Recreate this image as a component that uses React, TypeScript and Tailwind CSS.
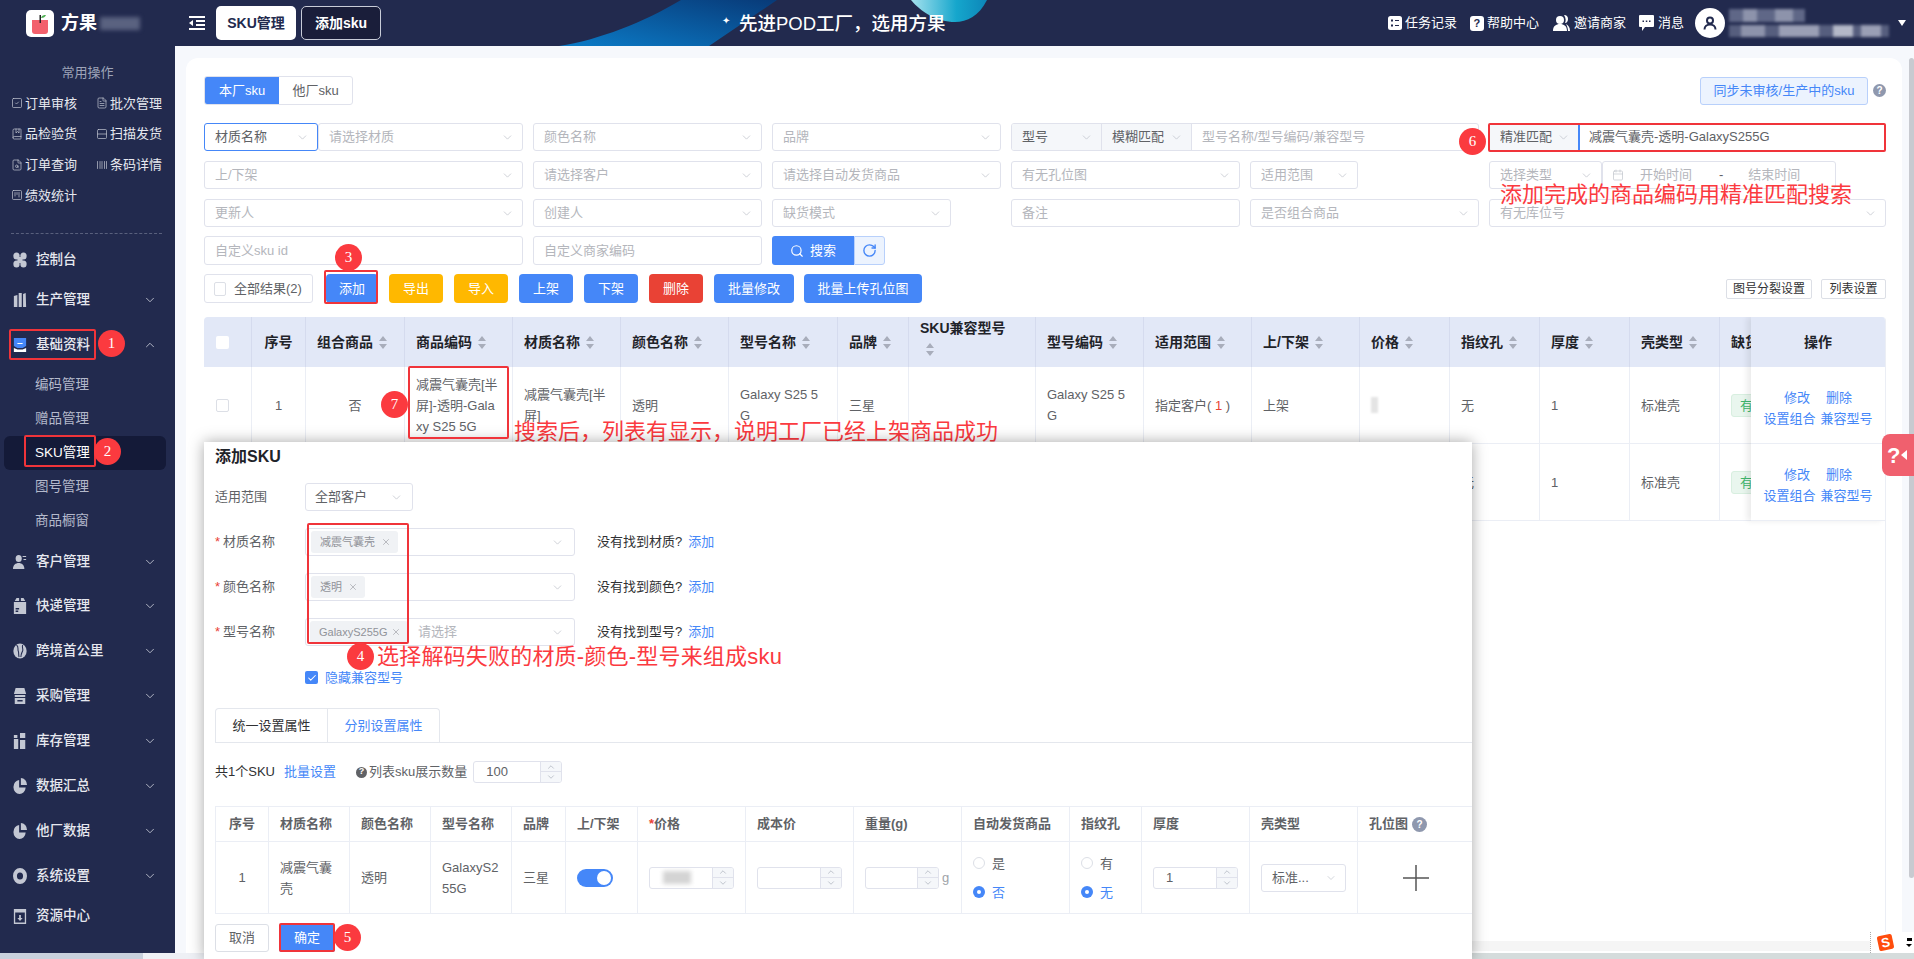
import type { ReactNode } from "react";
import {
  Barcode,
  BookMarked,
  Calendar,
  Check,
  ChevronDown,
  ChevronUp,
  FileSearch,
  FileText,
  RotateCw,
  Rows2,
  Search,
  SquareCheck,
  SquareKanban,
  X,
} from "lucide-react";

const MENU_ICONS: Record<string, ReactNode> = {
  dash: (
    <>
      <circle cx="4" cy="4" r="3.6" />
      <circle cx="12" cy="4" r="3.6" />
      <circle cx="4" cy="12" r="3.6" />
      <circle cx="12" cy="12" r="3.6" />
      <rect x="5" y="5" width="6" height="6" />
    </>
  ),
  prod: <path d="M1 4l4-1v12H1zM6.5 1h3.5v14H6.5zM11.5 2l3-1 .5 14h-3.5z" />,
  base: (
    <>
      <path d="M1 1h14v8l-4 2H5L1 9z" fill="#4587f8" />
      <path d="M1 11l4 1.5h6l4-1.5v4H1z" fill="#fff" />
      <path d="M5 6h6v1H5z" fill="#fff" />
    </>
  ),
  user: (
    <>
      <circle cx="6.5" cy="4.5" r="3.5" />
      <path d="M0 15c0-4 3-6 6.5-6s6.5 2 6.5 6zM11 2h4v1h-4zM12 5h3v1h-3z" />
    </>
  ),
  box: (
    <>
      <path d="M4 0h3v3H2zM9 0h3l2 3H9z" />
      <path d="M1 4h14v12H1zM3 10v1.5h4V10zM3 12.5V14h3v-1.5z" fillRule="evenodd" />
    </>
  ),
  globe: (
    <>
      <circle cx="8" cy="8" r="7.6" />
      <path d="M4 2c3 2 1 4 2 6s0 4 1 6M11 2c-1 3 1 4 0 6s-2 3-2 6" stroke="#222a4e" fill="none" strokeWidth="1.2" />
    </>
  ),
  shop: <path d="M3 0h10l2 6H1zM2 7h12v2H2zM2 10h12v6H2zM5 12v1.5h6V12z" fillRule="evenodd" />,
  stock: <path d="M1 6h5v10H1zM8 0h6v5H8zM8 7h6v9H8zM1 2h4v3H1z" />,
  pie: (
    <>
      <path d="M7 2a7 7 0 1 0 7.5 7.5H7z" />
      <path d="M9 0a7 7 0 0 1 7 7H9z" />
    </>
  ),
  gear: (
    <path
      d="M8 0a8 8 0 1 0 0 16A8 8 0 0 0 8 0zm0 4.500a3.500 3.500 0 1 1 0 7 3.500 3.500 0 0 1 0-7z"
      fillRule="evenodd"
    />
  ),
  res: <path d="M1 1h14v15H1zM2.500 4.500v10h11v-10zM7 7h2v3h2l-3 3-3-3h2z" fillRule="evenodd" />,
};

function MenuIcon({ name }: { name: string }) {
  return (
    <svg viewBox="0 0 16 16" className="h-[16px] w-[14px] shrink-0 fill-[#c3c7d3]" preserveAspectRatio="none">
      {MENU_ICONS[name]}
    </svg>
  );
}

const SHORTCUTS = [
  { label: "订单审核", Icon: SquareCheck },
  { label: "批次管理", Icon: FileText },
  { label: "品检验货", Icon: BookMarked },
  { label: "扫描发货", Icon: Rows2 },
  { label: "订单查询", Icon: FileSearch },
  { label: "条码详情", Icon: Barcode },
  { label: "绩效统计", Icon: SquareKanban },
];

const SUB_MENU = ["编码管理", "赠品管理", "SKU管理", "图号管理", "商品橱窗"];

const LOWER_MENU = [
  { label: "客户管理", icon: "user", cls: "mt-[4px]" },
  { label: "快递管理", icon: "box", cls: "mt-[4px]" },
  { label: "跨境首公里", icon: "globe", cls: "mt-[5px]" },
  { label: "采购管理", icon: "shop", cls: "mt-[5px]" },
  { label: "库存管理", icon: "stock", cls: "mt-[5px]" },
  { label: "数据汇总", icon: "pie", cls: "mt-[5px]" },
  { label: "他厂数据", icon: "pie", cls: "mt-[5px]" },
  { label: "系统设置", icon: "gear", cls: "mt-[5px]" },
];

function MenuRow({ label, icon, open, arrow = true, cls = "" }: { label: string; icon: string; open?: boolean; arrow?: boolean; cls?: string }) {
  return (
    <div className={`flex h-[40px] items-center pl-[13px] pr-[18px] text-[13.5px] font-medium text-[#e6e8ef] ${cls}`}>
      <MenuIcon name={icon} />
      <span className="ml-[9px]">{label}</span>
      {arrow &&
        (open ? (
          <ChevronUp className="ml-auto h-[14px] w-[14px] text-[#c3c7d3]" strokeWidth={1.5} />
        ) : (
          <ChevronDown className="ml-auto h-[14px] w-[14px] text-[#c3c7d3]" strokeWidth={1.5} />
        ))}
    </div>
  );
}

function Sidebar() {
  return (
    <aside className="h-[953px] w-[175px] shrink-0 bg-[#222a4e]">
      <div className="flex h-[46px] items-center pl-[26px]">
        <svg viewBox="0 0 28 27" className="h-[27px] w-[28px] shrink-0">
          <rect width="28" height="27" rx="5" fill="#fff" />
          <path d="M6 10h16v11a3 3 0 0 1-3 3H9a3 3 0 0 1-3-3z" fill="#f2606c" />
          <path d="M13.500 5h1.500v8h-1.500z" fill="#222" />
          <path d="M15 8c1-3 3-3 5-3-1 2-2 3-5 3z" fill="#4caf50" />
        </svg>
        <span className="ml-[7px] text-[18px] font-bold text-white">方果</span>
        <div className="ml-[3px] h-[13px] w-[40px] bg-[#5a6280] blur-[2px]" />
      </div>
      <div className="mt-[17px] text-center text-[13px] leading-[20px] text-[#9ea4b8]">常用操作</div>
      <div className="mt-[5px] grid auto-rows-[30.67px] grid-cols-[85px_80px] pl-[11px]">
        {SHORTCUTS.map(({ label, Icon }) => (
          <div key={label} className="flex items-center text-[13px] text-[#e6e8ef]">
            <Icon className="h-[12px] w-[12px] shrink-0 text-[#c3c7d3]" strokeWidth={1.4} />
            <span className="ml-[2px] whitespace-nowrap">{label}</span>
          </div>
        ))}
      </div>
      <div className="ml-[11px] mt-[22px] w-[151px] border-t border-dashed border-[#59607d]" />
      <div className="mt-[6px]">
        <MenuRow label="控制台" icon="dash" arrow={false} />
        <MenuRow label="生产管理" icon="prod" />
        <MenuRow label="基础资料" icon="base" open cls="mt-[5px]" />
        <div className="mt-[3px]">
          {SUB_MENU.map((label) =>
            label === "SKU管理" ? (
              <div key={label} className="ml-[4px] flex h-[34px] w-[162px] items-center rounded-md bg-[#141a38] pl-[31px] text-[13.5px] text-white">
                {label}
              </div>
            ) : (
              <div key={label} className="flex h-[34px] items-center pl-[35px] text-[13.5px] text-[#b4b9cb]">
                {label}
              </div>
            ),
          )}
        </div>
        {LOWER_MENU.map((m) => (
          <MenuRow key={m.label} label={m.label} icon={m.icon} cls={m.cls} />
        ))}
        <MenuRow label="资源中心" icon="res" arrow={false} />
      </div>
    </aside>
  );
}

function Topbar() {
  return (
    <header className="relative flex h-[46px] items-center overflow-hidden bg-[#222a4e] pl-[14px] pr-[8px] text-white">
      <svg viewBox="0 0 430 46" className="absolute left-[384px] top-0 h-[46px] w-[430px]">
        <defs>
          <linearGradient id="swoosh" x1="0" y1="1" x2="1" y2="0">
            <stop offset="0" stopColor="#0b7cc8" />
            <stop offset="1" stopColor="#083a78" />
          </linearGradient>
          <linearGradient id="blob" x1="0" y1="0" x2="1" y2="0">
            <stop offset="0" stopColor="#a6e2ee" />
            <stop offset="0.6" stopColor="#15a6cc" />
            <stop offset="1" stopColor="#0d86b8" />
          </linearGradient>
        </defs>
        <path d="M0 46C40 40 85 22 122 0H218L150 46z" fill="url(#swoosh)" />
        <path d="M352 0H428C420 16 408 22 396 22C378 22 362 12 352 0z" fill="url(#blob)" />
      </svg>
      <svg viewBox="0 0 16 14" className="relative h-[14px] w-[16px]">
        <path d="M0 0h16v2H0zM7 4h9v2H7zM7 8h9v2H7zM0 12h16v2H0zM0 7l4-3v6z" fill="#fff" />
      </svg>
      <div className="relative ml-[11px] flex h-[34px] w-[80px] items-center justify-center rounded-[5px] bg-white text-[14px] font-bold text-[#222a4e]">
        SKU管理
      </div>
      <div className="relative ml-[5px] flex h-[34px] w-[80px] items-center justify-center rounded-[5px] border border-[#c8ccd8] bg-[#1a1e3a] text-[14px] font-bold">
        添加sku
      </div>
      <span className="absolute left-[547px] top-[13px] text-[10px]">✦</span>
      <span className="absolute left-[564px] top-[11px] whitespace-nowrap text-[18.500px] font-medium leading-[26px]">
        先进POD工厂，选用方果
      </span>
      <div className="relative ml-auto flex items-center text-[13px]">
        <svg viewBox="0 0 14 14" className="h-[14px] w-[14px]">
          <rect width="14" height="14" rx="2.500" fill="#fff" />
          <path d="M3 3.500h2v2H3zM7 4h4v1H7zM3 8.500h2v2H3zM7 9h4v1H7z" fill="#222a4e" />
        </svg>
        <span className="ml-[3px]">任务记录</span>
        <div className="ml-[13px] flex h-[15px] w-[14px] items-center justify-center rounded-[3px] bg-white text-[11px] font-bold text-[#222a4e]">?</div>
        <span className="ml-[3px]">帮助中心</span>
        <svg viewBox="0 0 17 16" className="ml-[14px] h-[16px] w-[17px] fill-white">
          <circle cx="7" cy="5" r="4" />
          <path d="M0 16c0-5 3-7 7-7s7 2 7 7zM11 0c3 0 4 2 4 4s-1 4-3 4c1-2 1-5-1-8zM13 9c2 1 4 3 4 7h-2c0-3-1-5-2-7z" />
        </svg>
        <span className="ml-[4px]">邀请商家</span>
        <svg viewBox="0 0 15 16" className="ml-[13px] h-[16px] w-[15px]">
          <path d="M1 0h13a1 1 0 0 1 1 1v10a1 1 0 0 1-1 1H6l-3 4v-4H1a1 1 0 0 1-1-1V1a1 1 0 0 1 1-1z" fill="#fff" />
          <path d="M3.500 5.500h1.500V7H3.500zM6.800 5.500h1.500V7H6.800zM10 5.500h1.500V7H10z" fill="#222a4e" />
        </svg>
        <span className="ml-[4px]">消息</span>
        <div className="ml-[11px] flex h-[30px] w-[30px] items-center justify-center rounded-full bg-white">
          <svg viewBox="0 0 14 14" className="h-[14px] w-[14px]">
            <circle cx="7" cy="4.500" r="3" fill="none" stroke="#222a4e" strokeWidth="2" />
            <path d="M1.500 13.500c0-3 2.500-5 5.500-5s5.500 2 5.500 5" fill="none" stroke="#222a4e" strokeWidth="2" />
          </svg>
        </div>
        <div className="ml-[4px] w-[169px]">
          <div className="flex h-[13px] w-[76px] bg-[#5f6787] blur-[1.5px]">
            <div className="ml-[14px] h-full w-[14px] bg-[#8d93ab]" />
            <div className="ml-[18px] h-full w-[18px] bg-[#8d93ab]" />
          </div>
          <div className="mt-[3px] flex h-[12px] w-[160px] bg-[#565e7e] blur-[1.5px]">
            <div className="ml-[12px] h-full w-[24px] bg-[#8d93ab]" />
            <div className="ml-[14px] h-full w-[40px] bg-[#9a9fb5]" />
            <div className="ml-[14px] h-full w-[20px] bg-[#b4b8c8]" />
            <div className="ml-[8px] h-full w-[20px] bg-[#9a9fb5]" />
          </div>
        </div>
        <div className="h-0 w-0 border-x-[4px] border-t-[6px] border-x-transparent border-t-white" />
      </div>
    </header>
  );
}

function Select({ text, w, dark, focus }: { text: string; w: string; dark?: boolean; focus?: boolean }) {
  return (
    <div className={`flex h-full items-center justify-between rounded-[3px] bg-white pl-[10px] pr-[8px] text-[13px] ${focus ? "border-[1.5px] border-[#4587f8]" : "border border-[#e0e2ec]"} ${dark ? "text-[#606266]" : "text-[#b4b6bc]"} ${w}`}>
      <span className="whitespace-nowrap">{text}</span>
      <ChevronDown className="h-[13px] w-[13px] shrink-0 text-[#c0c4cc]" strokeWidth={1.4} />
    </div>
  );
}

function Input({ text, w }: { text: string; w: string }) {
  return (
    <div className={`flex h-full items-center rounded-[3px] border border-[#e0e2ec] bg-white pl-[10px] text-[13px] text-[#b4b6bc] ${w}`}>
      <span className="whitespace-nowrap">{text}</span>
    </div>
  );
}

function Btn({ label, w, bg }: { label: string; w: string; bg: string }) {
  return (
    <div className={`flex h-full items-center justify-center rounded-[4px] text-[13px] text-white ${w} ${bg}`}>{label}</div>
  );
}

function Filters() {
  return (
    <div className="mt-[18px] flex flex-col">
      <div className="flex h-[28px] gap-[10px]">
        <div className="flex w-[319px]">
          <Select text="材质名称" w="w-[114px]" dark focus />
          <Select text="请选择材质" w="w-[205px]" />
        </div>
        <Select text="颜色名称" w="w-[229px]" />
        <Select text="品牌" w="w-[229px]" />
        <div className="flex w-[468px] overflow-hidden rounded-[3px] border border-[#e0e2ec]">
          <div className="flex w-[90px] items-center justify-between border-r border-[#e0e2ec] bg-[#f5f7fa] pl-[10px] pr-[8px] text-[13px] text-[#606266]">
            型号
            <ChevronDown className="h-[13px] w-[13px] text-[#c0c4cc]" strokeWidth={1.4} />
          </div>
          <div className="flex w-[90px] items-center justify-between border-r border-[#e0e2ec] bg-[#f5f7fa] pl-[10px] pr-[8px] text-[13px] text-[#606266]">
            模糊匹配
            <ChevronDown className="h-[13px] w-[13px] text-[#c0c4cc]" strokeWidth={1.4} />
          </div>
          <div className="flex flex-1 items-center pl-[10px] text-[13px] text-[#b4b6bc]">型号名称/型号编码/兼容型号</div>
        </div>
        <div className="flex w-[397px] overflow-hidden rounded-[3px] border border-[#e0e2ec]">
          <div className="flex w-[90px] items-center justify-between border-r-2 border-[#4587f8] bg-[#f5f7fa] pl-[10px] pr-[8px] text-[13px] text-[#606266]">
            精准匹配
            <ChevronDown className="h-[13px] w-[13px] text-[#c0c4cc]" strokeWidth={1.4} />
          </div>
          <div className="flex flex-1 items-center pl-[9px] text-[13px] text-[#606266]">减震气囊壳-透明-GalaxyS255G</div>
        </div>
      </div>
      <div className="mt-[10px] flex h-[28px] gap-[10px]">
        <Select text="上/下架" w="w-[319px]" />
        <Select text="请选择客户" w="w-[229px]" />
        <Select text="请选择自动发货商品" w="w-[229px]" />
        <Select text="有无孔位图" w="w-[229px]" />
        <Select text="适用范围" w="w-[108px]" />
        <div className="ml-[121px] flex h-full">
          <Select text="选择类型" w="w-[113px]" />
          <div className="flex w-[234px] items-center rounded-[3px] border border-[#e0e2ec] pl-[9px] text-[13px] text-[#b4b6bc]">
            <Calendar className="h-[12px] w-[12px] text-[#c0c4cc]" strokeWidth={1.4} />
            <span className="ml-[16px]">开始时间</span>
            <span className="ml-[27px] text-[#606266]">-</span>
            <span className="ml-[25px]">结束时间</span>
          </div>
        </div>
      </div>
      <div className="mt-[10px] flex h-[28px] gap-[10px]">
        <Select text="更新人" w="w-[319px]" />
        <Select text="创建人" w="w-[229px]" />
        <Select text="缺货模式" w="w-[179px]" />
        <Input text="备注" w="ml-[50px] w-[229px]" />
        <Select text="是否组合商品" w="w-[229px]" />
        <Select text="有无库位号" w="w-[397px]" />
      </div>
      <div className="mt-[9px] flex h-[29px] gap-[10px]">
        <Input text="自定义sku id" w="w-[319px]" />
        <Input text="自定义商家编码" w="w-[229px]" />
        <div className="flex">
          <div className="flex w-[82px] items-center justify-center gap-[6px] rounded-l-[3px] bg-[#4587f8] text-[13px] text-white">
            <Search className="h-[14px] w-[14px]" strokeWidth={2} />
            搜索
          </div>
          <div className="flex w-[31px] items-center justify-center rounded-r-[3px] border border-[#b8d0fb] bg-[#ecf3fe]">
            <RotateCw className="h-[15px] w-[15px] text-[#4587f8]" strokeWidth={2.2} />
          </div>
        </div>
      </div>
    </div>
  );
}

function Sort() {
  return (
    <svg viewBox="0 0 8 13" className="ml-[6px] inline-block h-[13px] w-[8px] align-[-2px] fill-[#a8adbb]">
      <path d="M4 0l4 5H0zM4 13L0 8h8z" />
    </svg>
  );
}

const HEAD = [
  { label: "组合商品", w: "w-[99px]" },
  { label: "商品编码", w: "w-[108px]" },
  { label: "材质名称", w: "w-[108px]" },
  { label: "颜色名称", w: "w-[108px]" },
  { label: "型号名称", w: "w-[109px]" },
  { label: "品牌", w: "w-[71px]" },
  { label: "SKU兼容型号", w: "w-[127px]" },
  { label: "型号编码", w: "w-[108px]" },
  { label: "适用范围", w: "w-[108px]" },
  { label: "上/下架", w: "w-[108px]" },
  { label: "价格", w: "w-[90px]" },
  { label: "指纹孔", w: "w-[90px]" },
  { label: "厚度", w: "w-[90px]" },
  { label: "壳类型", w: "w-[90px]" },
  { label: "缺货模式", w: "w-[167px]" },
];

function Row() {
  const td = "border-r border-b border-[#ebeef5] pl-[11px] pr-[13px] break-all";
  return (
    <tr className="h-[77px] text-[13px] leading-[21px] text-[#606266]">
      <td className="border-r border-b border-[#ebeef5] pl-[12px]">
        <div className="h-[13px] w-[13px] rounded-[2px] border border-[#dcdfe6]" />
      </td>
      <td className="border-r border-b border-[#ebeef5] text-center">1</td>
      <td className="border-r border-b border-[#ebeef5] text-center">否</td>
      <td className={td}>减震气囊壳[半屏]-透明-Galaxy S25 5G</td>
      <td className={td}>减震气囊壳[半屏]</td>
      <td className={td}>透明</td>
      <td className={td}>Galaxy S25 5G</td>
      <td className={td}>三星</td>
      <td className={td} />
      <td className={td}>Galaxy S25 5G</td>
      <td className={td}>
        指定客户( <span className="text-[#e94235]">1</span> )
      </td>
      <td className={td}>上架</td>
      <td className={td}>
        <div className="h-[16px] w-[7px] bg-[#e4e4e4] blur-[1px]" />
      </td>
      <td className={td}>无</td>
      <td className={td}>1</td>
      <td className={td}>标准壳</td>
      <td className={td}>
        <span className="inline-block whitespace-nowrap rounded-[3px] border border-[#d8efe0] bg-[#e9f6ee] px-[8px] text-[#3fb56c]">有货</span>
      </td>
    </tr>
  );
}

function OpCell() {
  return (
    <div className="flex h-[77px] flex-col items-center justify-center border-b border-[#ebeef5] pt-[5px] text-[13px] leading-[21px] text-[#4587f8]">
      <div className="flex gap-[16px]">
        <span>修改</span>
        <span>删除</span>
      </div>
      <div className="flex gap-[5px]">
        <span>设置组合</span>
        <span>兼容型号</span>
      </div>
    </div>
  );
}

function MainTable() {
  return (
    <div className="relative mt-[14px] h-[623px] w-[1682px] overflow-hidden rounded-t-[4px] border-r border-[#ebeef5]">
      <table className="w-[1682px] table-fixed border-separate border-spacing-0">
        <thead>
          <tr className="h-[50px] bg-[#e2e8f7] text-left text-[14px] font-bold leading-[21px] text-[#1f2329]">
            <th className="w-[48px] border-r border-[#d5dbee] pl-[12px]">
              <div className="h-[13px] w-[13px] rounded-[2px] bg-white" />
            </th>
            <th className="w-[54px] border-r border-[#d5dbee] text-center">序号</th>
            {HEAD.map((h) => (
              <th key={h.label} className={`${h.w} overflow-hidden border-r border-[#d5dbee] pl-[11px] pr-[6px] font-bold`}>
                {h.label === "SKU兼容型号" ? (
                  <>
                    <div className="-mt-[6px]">{h.label}</div>
                    <Sort />
                  </>
                ) : (
                  <span className="whitespace-nowrap">
                    {h.label}
                    <Sort />
                  </span>
                )}
              </th>
            ))}
          </tr>
        </thead>
        <tbody>
          <Row />
          <Row />
        </tbody>
      </table>
      <div className="absolute right-0 top-0 w-[134px] bg-white shadow-[-4px_0_6px_rgba(0,0,0,0.08)]">
        <div className="flex h-[50px] items-center justify-center bg-[#e2e8f7] text-[14px] font-bold text-[#1f2329]">操作</div>
        <OpCell />
        <OpCell />
      </div>
    </div>
  );
}

function Spin({ w, value, blur }: { w: string; value?: string; blur?: boolean }) {
  return (
    <div className={`flex h-[22px] overflow-hidden rounded-[3px] border border-[#e0e2ec] bg-white ${w}`}>
      <div className="flex flex-1 items-center pl-[12px] text-[13px] text-[#606266]">
        {blur ? <div className="ml-[1px] h-[13px] w-[28px] bg-[#d4d4d4] blur-[2px]" /> : value}
      </div>
      <div className="flex w-[21px] flex-col border-l border-[#e0e2ec] bg-[#f5f7fa] text-[#9aa0ac]">
        <div className="flex h-1/2 items-center justify-center border-b border-[#e0e2ec]">
          <ChevronUp className="h-[10px] w-[10px]" strokeWidth={1.4} />
        </div>
        <div className="flex h-1/2 items-center justify-center">
          <ChevronDown className="h-[10px] w-[10px]" strokeWidth={1.4} />
        </div>
      </div>
    </div>
  );
}

function Radio({ on, label }: { on?: boolean; label: string }) {
  return (
    <div className={`flex h-[29px] items-center text-[13px] ${on ? "text-[#4587f8]" : "text-[#606266]"}`}>
      {on ? (
        <div className="flex h-[12px] w-[12px] items-center justify-center rounded-full bg-[#4587f8]">
          <div className="h-[4px] w-[4px] rounded-full bg-white" />
        </div>
      ) : (
        <div className="h-[12px] w-[12px] rounded-full border border-[#dcdfe6]" />
      )}
      <span className="ml-[7px]">{label}</span>
    </div>
  );
}

function Tag({ text, w, cls = "" }: { text: string; w: string; cls?: string }) {
  return (
    <div className={`flex h-[22px] shrink-0 items-center justify-between rounded-[3px] bg-[#f0f2f5] pl-[9px] pr-[7px] text-[11px] text-[#909399] ${w} ${cls}`}>
      <span className="whitespace-nowrap">{text}</span>
      <X className="h-[10px] w-[10px]" strokeWidth={1.4} />
    </div>
  );
}

function FormRow({ label, cls, children, missing }: { label: string; cls: string; children: ReactNode; missing: string }) {
  return (
    <div className={`flex h-[28px] items-center text-[13px] ${cls}`}>
      <div className="w-[90px] text-[#606266]">
        <span className="mr-[3px] text-[#e94235]">*</span>
        {label}
      </div>
      <div className="flex h-full w-[270px] items-center rounded-[3px] border border-[#e0e2ec] pl-[5px] pr-[10px]">
        {children}
        <ChevronDown className="ml-auto h-[13px] w-[13px] text-[#c0c4cc]" strokeWidth={1.4} />
      </div>
      <span className="ml-[22px] text-[#303133]">没有找到{missing}?</span>
      <span className="ml-[6px] text-[#4587f8]">添加</span>
    </div>
  );
}

function SubTable() {
  const th = "border-r border-[#ebeef5] pl-[11px] font-bold";
  const td = "border-r border-t border-[#ebeef5] pl-[11px]";
  return (
    <table className="mt-[23px] w-[1257px] table-fixed border-separate border-spacing-0 border-y border-l border-[#ebeef5]">
      <thead>
        <tr className="h-[34px] text-left text-[13px] text-[#606266]">
          <th className="w-[53px] border-r border-[#ebeef5] text-center font-bold">序号</th>
          <th className={`${th} w-[81px]`}>材质名称</th>
          <th className={`${th} w-[81px]`}>颜色名称</th>
          <th className={`${th} w-[81px]`}>型号名称</th>
          <th className={`${th} w-[54px]`}>品牌</th>
          <th className={`${th} w-[72px]`}>上/下架</th>
          <th className={`${th} w-[108px]`}>
            <span className="text-[#e94235]">*</span>价格
          </th>
          <th className={`${th} w-[108px]`}>成本价</th>
          <th className={`${th} w-[108px]`}>重量(g)</th>
          <th className={`${th} w-[108px]`}>自动发货商品</th>
          <th className={`${th} w-[72px]`}>指纹孔</th>
          <th className={`${th} w-[108px]`}>厚度</th>
          <th className={`${th} w-[108px]`}>壳类型</th>
          <th className="pl-[11px] font-bold">
            <span className="flex items-center">
              孔位图
              <span className="ml-[4px] flex h-[15px] w-[15px] items-center justify-center rounded-full bg-[#8f98ae] text-[10px] text-white">?</span>
            </span>
          </th>
        </tr>
      </thead>
      <tbody>
        <tr className="h-[72px] text-[13px] leading-[21px] text-[#606266]">
          <td className="border-r border-t border-[#ebeef5] text-center">1</td>
          <td className={`${td} pr-[12px] break-all`}>减震气囊壳</td>
          <td className={td}>透明</td>
          <td className={`${td} pr-[12px] break-all`}>GalaxyS255G</td>
          <td className={td}>三星</td>
          <td className={td}>
            <div className="flex h-[18px] w-[36px] items-center justify-end rounded-full bg-[#4587f8] pr-[2px]">
              <div className="h-[14px] w-[14px] rounded-full bg-white" />
            </div>
          </td>
          <td className={td}>
            <Spin w="w-[85px]" blur />
          </td>
          <td className={td}>
            <Spin w="w-[85px]" />
          </td>
          <td className={td}>
            <div className="flex items-center">
              <Spin w="w-[74px]" />
              <span className="ml-[3px] text-[#a0a3a9]">g</span>
            </div>
          </td>
          <td className={td}>
            <Radio label="是" />
            <Radio on label="否" />
          </td>
          <td className={td}>
            <Radio label="有" />
            <Radio on label="无" />
          </td>
          <td className={td}>
            <Spin w="w-[85px]" value="1" />
          </td>
          <td className={td}>
            <div className="flex h-[28px] w-[85px] items-center justify-between rounded-[3px] border border-[#e0e2ec] pl-[10px] pr-[8px]">
              标准...
              <ChevronDown className="h-[12px] w-[12px] text-[#c0c4cc]" strokeWidth={1.4} />
            </div>
          </td>
          <td className="border-t border-[#ebeef5]">
            <svg viewBox="0 0 26 26" className="ml-[45px] h-[26px] w-[26px]">
              <path d="M13 0v26M0 13h26" stroke="#555" strokeWidth="1.500" />
            </svg>
          </td>
        </tr>
      </tbody>
    </table>
  );
}

function Modal() {
  return (
    <div className="absolute left-[204px] top-[442px] z-30 h-[517px] w-[1268px] overflow-hidden bg-white pl-[11px] shadow-[0_0_14px_rgba(0,0,0,0.35)]">
      <div className="h-[41px] pt-[4px] text-[16px] font-bold leading-[22px] text-[#1f2329]">添加SKU</div>
      <div className="flex h-[28px] items-center text-[13px] text-[#606266]">
        <div className="w-[90px]">适用范围</div>
        <div className="flex h-full w-[108px] items-center justify-between rounded-[3px] border border-[#e0e2ec] pl-[9px] pr-[9px]">
          全部客户
          <ChevronDown className="h-[13px] w-[13px] text-[#c0c4cc]" strokeWidth={1.4} />
        </div>
      </div>
      <FormRow label="材质名称" missing="材质" cls="mt-[17px]">
        <Tag text="减震气囊壳" w="w-[87px]" />
      </FormRow>
      <FormRow label="颜色名称" missing="颜色" cls="mt-[17px]">
        <Tag text="透明" w="w-[54px]" />
      </FormRow>
      <FormRow label="型号名称" missing="型号" cls="mt-[17px]">
        <Tag text="GalaxyS255G" w="w-[98px]" cls="-ml-[1px]" />
        <span className="ml-[10px] text-[#b4b6bc]">请选择</span>
      </FormRow>
      <div className="ml-[90px] mt-[25px] flex h-[13px] items-center text-[13px] text-[#4587f8]">
        <div className="flex h-[13px] w-[13px] items-center justify-center rounded-[2px] bg-[#4587f8]">
          <Check className="h-[10px] w-[10px] text-white" strokeWidth={2.5} />
        </div>
        <span className="ml-[7px]">隐藏兼容型号</span>
      </div>
      <div className="mt-[24px] flex h-[35px] border-b border-[#e4e7ed] text-[13px]">
        <div className="flex w-[113px] items-center justify-center rounded-tl-[4px] border-x border-t border-[#e4e7ed] bg-white text-[#303133]">统一设置属性</div>
        <div className="flex w-[112px] items-center justify-center rounded-tr-[4px] border-r border-t border-[#e4e7ed] text-[#4587f8]">分别设置属性</div>
      </div>
      <div className="mt-[18px] flex h-[22px] items-center text-[13px] text-[#303133]">
        <span>共1个SKU</span>
        <span className="ml-[9px] text-[#4587f8]">批量设置</span>
        <span className="ml-[20px] flex h-[11px] w-[11px] items-center justify-center rounded-full bg-[#606266] text-[9px] font-bold text-white">?</span>
        <span className="ml-[2px] text-[#606266]">列表sku展示数量</span>
        <Spin w="ml-[6px] w-[89px]" value="100" />
      </div>
      <SubTable />
      <div className="mt-[10px] flex h-[28px] gap-[10px] text-[13px]">
        <div className="flex w-[54px] items-center justify-center rounded-[3px] border border-[#dcdfe6] text-[#606266]">取消</div>
        <div className="flex w-[56px] items-center justify-center rounded-[3px] bg-[#4587f8] text-white">确定</div>
      </div>
    </div>
  );
}

function Num({ n, cls }: { n: number; cls: string }) {
  return (
    <div className={`absolute z-40 flex h-[27px] w-[27px] items-center justify-center rounded-full bg-[#fb3a3f] text-[15px] text-white [font-family:'Liberation_Serif',serif] ${cls}`}>
      {n}
    </div>
  );
}

function Annotations() {
  const box = "absolute z-40 rounded-[2px] border-[2px] border-[#f0343a]";
  const note = "absolute whitespace-nowrap text-[22px] leading-[28px] text-[#fb3a3f]";
  return (
    <>
      <div className={`${box} left-[9px] top-[329px] h-[31px] w-[87px]`} />
      <div className={`${box} left-[24px] top-[435px] h-[32px] w-[72px]`} />
      <div className={`${box} left-[324px] top-[270px] h-[34px] w-[54px]`} />
      <div className={`${box} left-[1488px] top-[123px] h-[29px] w-[398px]`} />
      <div className={`${box} left-[408px] top-[366px] h-[73px] w-[101px]`} />
      <div className={`${box} left-[307px] top-[523px] h-[121px] w-[102px]`} />
      <div className={`${box} left-[279px] top-[923px] h-[29px] w-[56px]`} />
      <Num n={1} cls="left-[98px] top-[330px]" />
      <Num n={2} cls="left-[94px] top-[438px]" />
      <Num n={3} cls="left-[335px] top-[244px]" />
      <Num n={4} cls="left-[347px] top-[643px]" />
      <Num n={5} cls="left-[334px] top-[924px]" />
      <Num n={6} cls="left-[1459px] top-[128px]" />
      <Num n={7} cls="left-[381px] top-[391px]" />
      <div className={`${note} left-[1500px] top-[181px] z-20`}>添加完成的商品编码用精准匹配搜索</div>
      <div className={`${note} left-[514px] top-[418px] z-20`}>搜索后，列表有显示，说明工厂已经上架商品成功</div>
      <div className={`${note} left-[377px] top-[643px] z-40 tracking-[0.2px]`}>选择解码失败的材质-颜色-型号来组成sku</div>
    </>
  );
}

export default function App() {
  return (
    <div className="relative h-[959px] w-[1914px] overflow-hidden bg-[#eef0f5] [font-family:'Liberation_Sans','Noto_Sans_CJK_SC',sans-serif]">
      <div className="flex h-[953px]">
        <Sidebar />
        <main className="flex min-w-0 flex-1 flex-col">
          <Topbar />
          <div className="flex flex-1 bg-[#f6f8fc] pl-[11px] pt-[12px]">
            <section className="h-[895px] w-[1716px] rounded-t-xl bg-white pl-[18px] pt-[18px]">
              <div className="flex h-[29px] w-[1682px] items-center">
                <div className="flex h-full overflow-hidden rounded-[3px] border border-[#e0e2ec] text-[13px]">
                  <div className="flex w-[74px] items-center justify-center bg-[#4587f8] text-white">本厂sku</div>
                  <div className="flex w-[73px] items-center justify-center text-[#606266]">他厂sku</div>
                </div>
                <div className="ml-auto flex h-[28px] w-[168px] items-center justify-center rounded-[3px] border border-[#b8d0fb] bg-[#ecf3fe] text-[13px] text-[#4587f8]">
                  同步未审核/生产中的sku
                </div>
                <div className="ml-[5px] flex h-[13px] w-[13px] items-center justify-center rounded-full bg-[#8f98ae] text-[10px] font-bold text-white">?</div>
              </div>
              <Filters />
              <div className="mt-[9px] flex h-[29px] w-[1682px] items-center gap-[11px]">
                <div className="flex h-full w-[109px] items-center rounded-[3px] border border-[#e0e2ec] pl-[9px] text-[13px] text-[#606266]">
                  <div className="h-[14px] w-[12px] rounded-[2px] border border-[#dcdfe6]" />
                  <span className="ml-[8px]">全部结果(2)</span>
                </div>
                <Btn label="添加" w="ml-[2px] w-[52px]" bg="bg-[#4587f8]" />
                <Btn label="导出" w="w-[54px]" bg="bg-[#ffb800]" />
                <Btn label="导入" w="w-[54px]" bg="bg-[#ffb800]" />
                <Btn label="上架" w="w-[54px]" bg="bg-[#4587f8]" />
                <Btn label="下架" w="w-[54px]" bg="bg-[#4587f8]" />
                <Btn label="删除" w="w-[54px]" bg="bg-[#e94235]" />
                <Btn label="批量修改" w="w-[80px]" bg="bg-[#4587f8]" />
                <Btn label="批量上传孔位图" w="-ml-[1px] w-[118px]" bg="bg-[#4587f8]" />
                <div className="ml-auto flex h-[20px] w-[86px] items-center justify-center rounded-[2px] border border-[#dcdfe6] text-[12px] text-[#303133]">图号分裂设置</div>
                <div className="-ml-[2px] flex h-[20px] w-[65px] items-center justify-center rounded-[2px] border border-[#dcdfe6] text-[12px] text-[#303133]">列表设置</div>
              </div>
              <MainTable />
            </section>
            <div className="ml-[7px] h-[820px] w-[5px] rounded-full bg-[#c8cad0]" />
          </div>
        </main>
      </div>
      <div className="absolute bottom-0 left-0 h-[6px] w-[143px] bg-[#c8d0dc]" />
      <div className="absolute bottom-0 left-[1472px] h-[6px] w-[442px] bg-[#d5dcdc]" />
      <div className="absolute left-[1472px] top-[941px] h-[10px] w-[398px] bg-[#f5f5f5]" />
      <div className="absolute left-[1870px] top-[932px] flex h-[21px] w-[44px] items-center border-l border-dotted border-[#aaa] bg-white pl-[7px]">
        <div className="flex h-[15px] w-[15px] -rotate-12 items-center justify-center rounded-[2px] bg-[#ff4d0d] text-[13px] font-bold leading-none text-white">S</div>
        <div className="ml-[13px] flex flex-col items-center gap-[3px]">
          <div className="h-[3px] w-[5px] bg-black" />
          <div className="h-0 w-0 border-x-[3px] border-t-[3px] border-x-transparent border-t-black" />
        </div>
      </div>
      <div className="absolute left-[1882px] top-[434px] z-10 flex h-[42px] w-[32px] items-center rounded-l-lg bg-[#f0606e] pl-[5px] text-[22px] font-bold text-white">
        ?
        <div className="ml-[1px] h-0 w-0 border-y-[5px] border-r-[6px] border-y-transparent border-r-white" />
      </div>
      <Annotations />
      <Modal />
    </div>
  );
}
